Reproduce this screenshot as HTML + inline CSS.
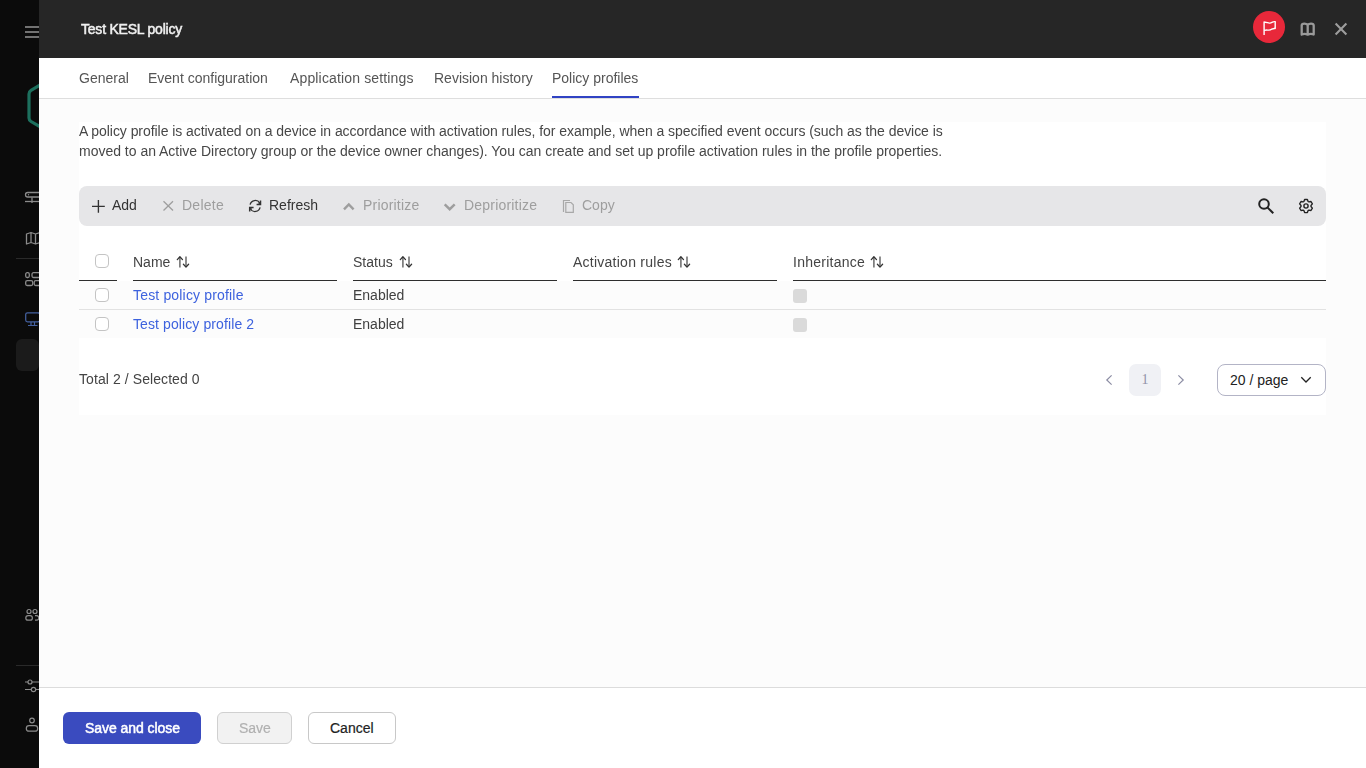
<!DOCTYPE html>
<html><head><meta charset="utf-8">
<style>
*{box-sizing:border-box;margin:0;padding:0}
html,body{width:1366px;height:768px;overflow:hidden;background:#fcfcfc;font-family:"Liberation Sans",sans-serif;position:relative}
.a{position:absolute}
.t{position:absolute;white-space:nowrap;font-size:14px;line-height:16px;will-change:transform}
.sp{will-change:auto}
svg{position:absolute;overflow:visible}
.tab{top:70px;color:#555}
.tbi{top:197px}
.dis{color:#9e9e9e}
.en{color:#333}
.th{top:254px;color:#444}
.thl{position:absolute;top:280px;height:1px;background:#2e2e2e}
.cb{position:absolute;width:14px;height:14px;border:1px solid #c4c4c4;border-radius:4px;background:#fff}
.cbd{position:absolute;width:14px;height:14px;border-radius:3px;background:#dadada}
.lnk{color:#3d62de}
.txt{color:#404040}
.btn{position:absolute;top:712px;height:32px;border-radius:6px}
</style></head>
<body>
<!-- sidebar -->
<div class="a" style="left:0;top:0;width:39px;height:768px;background:#0b0b0b"></div>
<!-- hamburger -->
<div class="a" style="left:25px;top:26px;width:14px;height:2px;background:#727272"></div>
<div class="a" style="left:25px;top:31px;width:14px;height:2px;background:#727272"></div>
<div class="a" style="left:25px;top:36px;width:14px;height:2px;background:#727272"></div>
<!-- logo hexagon -->
<svg width="39" height="160" style="left:0;top:60px;overflow:hidden">
  <path d="M44 22.8 L31 30.3 Q29 31.5 29 34 L29 58 Q29 60.3 31 61.5 L44 69" fill="none" stroke="#1d705e" stroke-width="3.2"/>
</svg>
<!-- server icon -->
<svg width="39" height="30" style="overflow:hidden;left:0;top:185px">
  <rect x="25.5" y="7.5" width="16" height="4.5" rx="2.2" fill="none" stroke="#8c8c8c" stroke-width="1.3"/>
  <circle cx="28.5" cy="9.7" r="0.7" fill="#8c8c8c"/>
  <path d="M32 12.5 V18" stroke="#8c8c8c" stroke-width="1.3"/>
  <path d="M25 16.5 H42" stroke="#8c8c8c" stroke-width="1.3"/>
</svg>
<!-- map icon -->
<svg width="39" height="30" style="overflow:hidden;left:0;top:225px">
  <path d="M26.5 9 L31 7.5 L35.5 9 L40 7.5 V17.5 L35.5 19 L31 17.5 L26.5 19 Z M31 7.5 V17.5 M35.5 9 V19" fill="none" stroke="#8c8c8c" stroke-width="1.3" stroke-linejoin="round"/>
</svg>
<div class="a" style="left:16px;top:258px;width:23px;height:1px;background:#2a2a2a"></div>
<!-- grid icon -->
<svg width="39" height="30" style="overflow:hidden;left:0;top:265px">
  <rect x="25.7" y="7.7" width="3.6" height="4.8" rx="1.5" fill="none" stroke="#8c8c8c" stroke-width="1.3"/>
  <rect x="32" y="7.7" width="8" height="4.8" rx="1.5" fill="none" stroke="#8c8c8c" stroke-width="1.3"/>
  <rect x="25.7" y="15.7" width="7" height="4.8" rx="1.5" fill="none" stroke="#8c8c8c" stroke-width="1.3"/>
  <rect x="34.2" y="15.7" width="6" height="4.8" rx="1.5" fill="none" stroke="#8c8c8c" stroke-width="1.3"/>
</svg>
<!-- monitor icon -->
<svg width="39" height="30" style="overflow:hidden;left:0;top:305px">
  <rect x="25.7" y="7.8" width="14" height="9" rx="1.8" fill="none" stroke="#4461a0" stroke-width="1.25"/>
  <path d="M31 17 V20 M34.5 17 V20 M28 20.5 H37.5" fill="none" stroke="#4461a0" stroke-width="1.2"/>
</svg>
<div class="a" style="left:16px;top:339px;width:23px;height:32px;border-radius:6px;background:#1b1b1b"></div>
<!-- users icon -->
<svg width="39" height="30" style="overflow:hidden;left:0;top:600px">
  <circle cx="29" cy="11.5" r="2" fill="none" stroke="#8c8c8c" stroke-width="1.2"/>
  <circle cx="35" cy="11.5" r="2" fill="none" stroke="#8c8c8c" stroke-width="1.2"/>
  <rect x="25.8" y="15.6" width="6.6" height="4.6" rx="2.3" fill="none" stroke="#8c8c8c" stroke-width="1.2"/>
  <path d="M35 15.6 H36.5 Q38.8 15.6 38.8 17.9 Q38.8 20.2 36.5 20.2 H35" fill="none" stroke="#8c8c8c" stroke-width="1.2"/>
</svg>
<div class="a" style="left:16px;top:665px;width:23px;height:1px;background:#2a2a2a"></div>
<!-- sliders icon -->
<svg width="39" height="30" style="overflow:hidden;left:0;top:672px">
  <path d="M25 10 H28 M32 10 H40 M25 17.5 H31.3 M35.7 17.5 H40" stroke="#8c8c8c" stroke-width="1.2"/>
  <circle cx="30" cy="10" r="2" fill="none" stroke="#8c8c8c" stroke-width="1.2"/>
  <circle cx="33.5" cy="17.5" r="2.2" fill="none" stroke="#8c8c8c" stroke-width="1.2"/>
</svg>
<!-- user icon -->
<svg width="39" height="30" style="overflow:hidden;left:0;top:710px">
  <circle cx="32" cy="10.5" r="2.3" fill="none" stroke="#8c8c8c" stroke-width="1.2"/>
  <rect x="26.3" y="15.6" width="11.4" height="5.6" rx="2.8" fill="none" stroke="#8c8c8c" stroke-width="1.2"/>
</svg>

<!-- header -->
<div class="a" style="left:39px;top:0;width:1327px;height:58px;background:#262626"></div>
<div class="t" style="left:81px;top:21px;color:#f0f0f0;-webkit-text-stroke:0.5px #f0f0f0;letter-spacing:-0.22px">Test KESL policy</div>
<div class="a" style="left:1253px;top:11px;width:32px;height:32px;border-radius:50%;background:#e8283a"></div>
<svg width="32" height="32" style="left:1253px;top:11px">
  <path d="M11.1 10.6 V23.9" stroke="#fff" stroke-width="1.4"/>
  <path d="M11.1 11.4 C13.5 10.6 15 12.6 17 12.1 C19 11.6 20 10.2 22.2 10.7 V17.6 C20 17.1 19 18.4 17 18.9 C15 19.4 13.5 18.7 11.1 19.4" fill="none" stroke="#fff" stroke-width="1.4" stroke-linejoin="round"/>
</svg>
<svg width="20" height="20" style="left:1298px;top:18.5px">
  <path d="M3.7 15.6 V6.4 Q3.7 4.6 6.4 4.6 Q8.6 4.6 9.7 5.9 Q10.8 4.6 13 4.6 Q15.7 4.6 15.7 6.4 V15.6 Q13 14.2 9.7 15.6 Q6.4 14.2 3.7 15.6 Z M9.7 5.9 V15.6" fill="none" stroke="#9a9a9a" stroke-width="2.3" stroke-linejoin="round"/>
</svg>
<svg width="20" height="20" style="left:1331px;top:19px">
  <path d="M4.6 4.6 L15.4 15.4 M15.4 4.6 L4.6 15.4" stroke="#9d9d9d" stroke-width="2.1"/>
</svg>

<!-- tabs -->
<div class="a" style="left:39px;top:58px;width:1327px;height:41px;background:#fff;border-bottom:1px solid #dedede"></div>
<div class="t tab" style="left:79px">General</div>
<div class="t tab" style="left:148px">Event configuration</div>
<div class="t tab" style="left:290px;letter-spacing:0.15px">Application settings</div>
<div class="t tab" style="left:434px">Revision history</div>
<div class="t tab" style="left:552px">Policy profiles</div>
<div class="a" style="left:552px;top:96px;width:87px;height:2px;background:#3143c4"></div>

<!-- card -->
<div class="a" style="left:79px;top:122px;width:1247px;height:293px;background:#fff"></div>
<div class="t txt" style="left:79px;top:121px;line-height:20px;color:#474747;will-change:transform;letter-spacing:-0.055px">A policy profile is activated on a device in accordance with activation rules, for example, when a specified event occurs (such as the device is</div>
<div class="t txt" style="left:79px;top:141px;line-height:20px;color:#474747;will-change:transform;letter-spacing:-0.01px">moved to an Active Directory group or the device owner changes). You can create and set up profile activation rules in the profile properties.</div>

<!-- toolbar -->
<div class="a" style="left:79px;top:186px;width:1247px;height:40px;background:#e6e6e8;border-radius:8px"></div>
<svg width="16" height="16" style="left:90px;top:198px">
  <path d="M8.4 2 V14.8 M2 8.4 H14.8" stroke="#333" stroke-width="1.35"/>
</svg>
<div class="t tbi en" style="left:112px">Add</div>
<svg width="16" height="16" style="left:160px;top:198px">
  <path d="M3.5 3.3 L13 12.5 M13 3.3 L3.5 12.5" stroke="#9e9e9e" stroke-width="1.3"/>
</svg>
<div class="t tbi dis" style="left:182px;letter-spacing:0.25px">Delete</div>
<svg width="16" height="16" style="left:247px;top:198px">
  <path d="M3.1 6.6 A5.3 5.3 0 0 1 12.8 5" fill="none" stroke="#333" stroke-width="1.3"/>
  <path d="M13.5 2.6 V6.6 H9.6" fill="none" stroke="#333" stroke-width="1.5" stroke-linejoin="miter"/><path d="M13.5 6.6 L11.5 4.6" stroke="#333" stroke-width="1.2"/>
  <path d="M13.1 9.4 A5.3 5.3 0 0 1 3.4 11" fill="none" stroke="#333" stroke-width="1.3"/>
  <path d="M2.7 13.4 V9.4 H6.6" fill="none" stroke="#333" stroke-width="1.5" stroke-linejoin="miter"/><path d="M2.7 9.4 L4.7 11.4" stroke="#333" stroke-width="1.2"/>
</svg>
<div class="t tbi en" style="left:269px">Refresh</div>
<svg width="16" height="16" style="left:341px;top:198px">
  <path d="M3 11.4 L7.8 6.5 L12.6 11.4" fill="none" stroke="#9e9e9e" stroke-width="2.4"/>
</svg>
<div class="t tbi dis" style="left:363px;letter-spacing:0.2px">Prioritize</div>
<svg width="16" height="16" style="left:442px;top:198px">
  <path d="M2.7 6.3 L7.7 11.2 L12.7 6.3" fill="none" stroke="#9e9e9e" stroke-width="2.4"/>
</svg>
<div class="t tbi dis" style="left:464px;letter-spacing:0.2px">Deprioritize</div>
<svg width="16" height="16" style="left:560px;top:198px">
  <path d="M3.5 14 V2.5 H10" fill="none" stroke="#a8a8a8" stroke-width="1.2"/>
  <path d="M5.8 4.5 H11 L13.3 6.8 V14.3 H5.8 Z" fill="none" stroke="#a8a8a8" stroke-width="1.2"/>
</svg>
<div class="t tbi dis" style="left:582px">Copy</div>
<svg width="20" height="20" style="left:1254px;top:195px">
  <circle cx="10" cy="9" r="4.8" fill="none" stroke="#222" stroke-width="2"/>
  <path d="M13.4 12.4 L19.3 18.3" stroke="#222" stroke-width="2"/>
</svg>
<svg width="20" height="20" style="left:1296px;top:196px">
  <path d="M7.89 5.47 L8.61 3.45 L11.39 3.45 L12.11 5.47 L12.87 5.90 L14.98 5.52 L16.37 7.93 L14.98 9.56 L14.98 10.44 L16.37 12.07 L14.98 14.48 L12.87 14.10 L12.11 14.53 L11.39 16.55 L8.61 16.55 L7.89 14.53 L7.13 14.10 L5.02 14.48 L3.63 12.07 L5.02 10.44 L5.02 9.56 L3.63 7.93 L5.02 5.52 L7.13 5.90 Z" fill="none" stroke="#222" stroke-width="1.35" stroke-linejoin="round"/>
  <circle cx="10" cy="10" r="2.1" fill="none" stroke="#222" stroke-width="1.4"/>
</svg>

<!-- table header -->
<div class="cb" style="left:95px;top:254px"></div>
<div class="t th" style="left:133px">Name</div>
<div class="t th" style="left:353px">Status</div>
<div class="t th" style="left:573px;letter-spacing:0.25px">Activation rules</div>
<div class="t th" style="left:793px;letter-spacing:0.25px">Inheritance</div>
<svg width="14" height="14" style="left:176px;top:255px" class="sorti"><path d="M3.9 12.6 V2 M10 1.4 V12" fill="none" stroke="#6a6a6a" stroke-width="1.5"/><path d="M1.3 4.6 L3.9 1.8 L6.5 4.6 M7.4 9.3 L10 12.1 L12.6 9.3" fill="none" stroke="#333" stroke-width="1.3" stroke-linecap="round" stroke-linejoin="round"/></svg>
<svg width="14" height="14" style="left:399px;top:255px"><path d="M3.9 12.6 V2 M10 1.4 V12" fill="none" stroke="#6a6a6a" stroke-width="1.5"/><path d="M1.3 4.6 L3.9 1.8 L6.5 4.6 M7.4 9.3 L10 12.1 L12.6 9.3" fill="none" stroke="#333" stroke-width="1.3" stroke-linecap="round" stroke-linejoin="round"/></svg>
<svg width="14" height="14" style="left:677px;top:255px"><path d="M3.9 12.6 V2 M10 1.4 V12" fill="none" stroke="#6a6a6a" stroke-width="1.5"/><path d="M1.3 4.6 L3.9 1.8 L6.5 4.6 M7.4 9.3 L10 12.1 L12.6 9.3" fill="none" stroke="#333" stroke-width="1.3" stroke-linecap="round" stroke-linejoin="round"/></svg>
<svg width="14" height="14" style="left:870px;top:255px"><path d="M3.9 12.6 V2 M10 1.4 V12" fill="none" stroke="#6a6a6a" stroke-width="1.5"/><path d="M1.3 4.6 L3.9 1.8 L6.5 4.6 M7.4 9.3 L10 12.1 L12.6 9.3" fill="none" stroke="#333" stroke-width="1.3" stroke-linecap="round" stroke-linejoin="round"/></svg>
<div class="thl" style="left:79px;width:38px"></div>
<div class="thl" style="left:133px;width:204px"></div>
<div class="thl" style="left:353px;width:204px"></div>
<div class="thl" style="left:573px;width:204px"></div>
<div class="thl" style="left:793px;width:533px"></div>

<!-- rows -->
<div class="a" style="left:79px;top:281px;width:1247px;height:57px;background:#fcfcfc"></div>
<div class="cb" style="left:95px;top:288px"></div>
<div class="t lnk" style="left:133px;top:287px;letter-spacing:0.17px">Test policy profile</div>
<div class="t txt" style="left:353px;top:287px">Enabled</div>
<div class="cbd" style="left:793px;top:289px"></div>
<div class="a" style="left:79px;top:309px;width:1247px;height:1px;background:#e2e2e2"></div>
<div class="cb" style="left:95px;top:317px"></div>
<div class="t lnk" style="left:133px;top:316px;letter-spacing:0.1px">Test policy profile 2</div>
<div class="t txt" style="left:353px;top:316px">Enabled</div>
<div class="cbd" style="left:793px;top:318px"></div>

<!-- pagination -->
<div class="t txt" style="left:79px;top:371px;color:#444;letter-spacing:0.08px">Total 2 / Selected 0</div>
<svg width="12" height="14" style="left:1103px;top:373px"><path d="M8.6 2.4 L3.8 7 L8.6 11.6" fill="none" stroke="#8b8ca3" stroke-width="1.2"/></svg>
<div class="a" style="left:1129px;top:364px;width:32px;height:32px;border-radius:7px;background:#f0f1f5"></div>
<div class="t sp" style="left:1129px;top:372px;width:32px;text-align:center;color:#9293a8;font-family:'Liberation Serif',serif;font-size:14px">1</div>
<svg width="12" height="14" style="left:1175px;top:373px"><path d="M3.4 2.4 L8.2 7 L3.4 11.6" fill="none" stroke="#8b8ca3" stroke-width="1.2"/></svg>
<div class="a" style="left:1217px;top:364px;width:109px;height:32px;border-radius:8px;border:1px solid #b3b4c6;background:#fff"></div>
<div class="t sp" style="left:1230px;top:372px;color:#222">20 / page</div>
<svg width="14" height="10" style="left:1299px;top:375px"><path d="M2.3 2.3 L7 7 L11.7 2.3" fill="none" stroke="#222" stroke-width="1.3"/></svg>

<!-- footer -->
<div class="a" style="left:39px;top:687px;width:1327px;height:81px;background:#fff;border-top:1px solid #dcdcdc"></div>
<div class="btn" style="left:63px;width:138px;background:#3a4bbf"></div>
<div class="t" style="left:85px;top:720px;color:#fff;-webkit-text-stroke:0.5px #fff;letter-spacing:-0.05px">Save and close</div>
<div class="btn" style="left:217px;width:75px;background:#f2f2f2;border:1px solid #d0d0d0"></div>
<div class="t" style="left:239px;top:720px;color:#b0b0b0;-webkit-text-stroke:0.2px #b0b0b0">Save</div>
<div class="btn" style="left:308px;width:88px;background:#fff;border:1px solid #c8c8c8"></div>
<div class="t sp" style="left:330px;top:720px;color:#222;-webkit-text-stroke:0.2px #222">Cancel</div>
</body></html>
